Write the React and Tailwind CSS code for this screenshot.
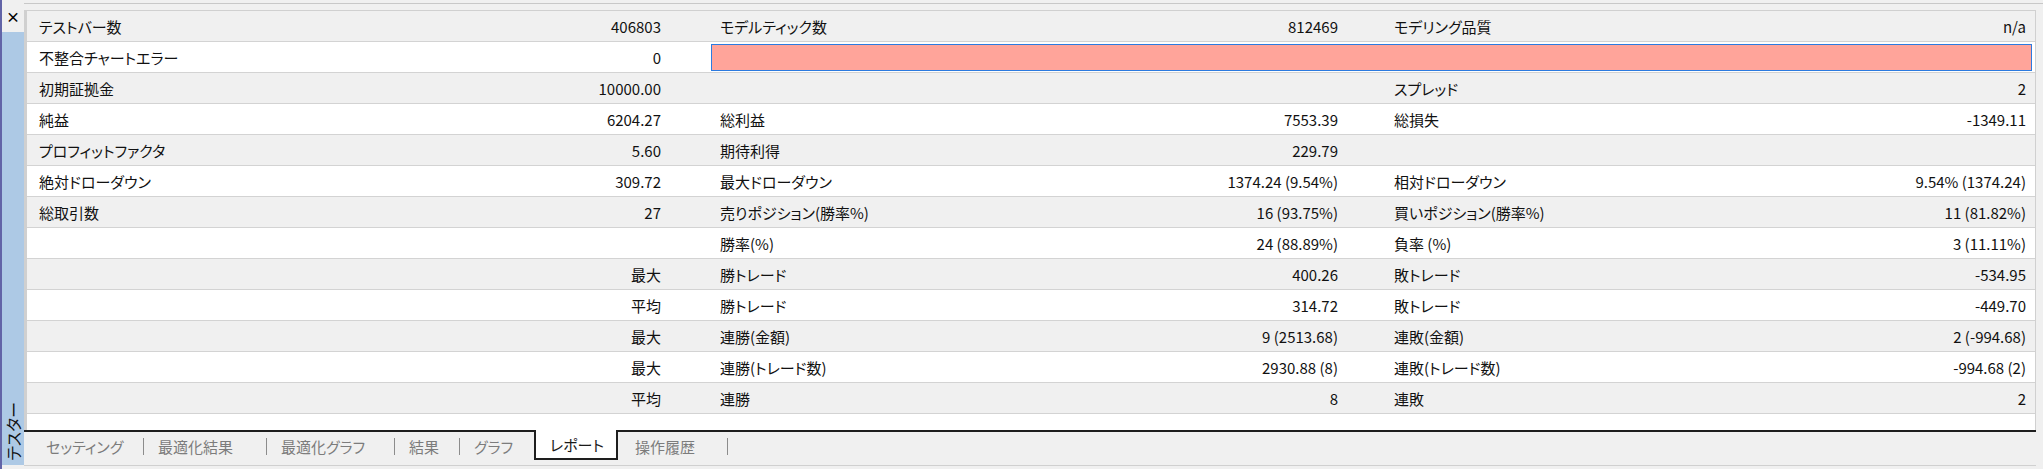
import React from 'react';

const rows = [
  ['テストバー数', '406803', 'モデルティック数', '812469', 'モデリング品質', 'n/a'],
  ['不整合チャートエラー', '0', null],
  ['初期証拠金', '10000.00', '', '', 'スプレッド', '2'],
  ['純益', '6204.27', '総利益', '7553.39', '総損失', '-1349.11'],
  ['プロフィットファクタ', '5.60', '期待利得', '229.79', '', ''],
  ['絶対ドローダウン', '309.72', '最大ドローダウン', '1374.24 (9.54%)', '相対ドローダウン', '9.54% (1374.24)'],
  ['総取引数', '27', '売りポジション(勝率%)', '16 (93.75%)', '買いポジション(勝率%)', '11 (81.82%)'],
  ['', '', '勝率(%)', '24 (88.89%)', '負率 (%)', '3 (11.11%)'],
  ['', '最大', '勝トレード', '400.26', '敗トレード', '-534.95'],
  ['', '平均', '勝トレード', '314.72', '敗トレード', '-449.70'],
  ['', '最大', '連勝(金額)', '9 (2513.68)', '連敗(金額)', '2 (-994.68)'],
  ['', '最大', '連勝(トレード数)', '2930.88 (8)', '連敗(トレード数)', '-994.68 (2)'],
  ['', '平均', '連勝', '8', '連敗', '2'],
];

// inactive tabs left of the active one: [label, slot width]
const leftTabs = [
  ['セッティング', 'w-[97px]'],
  ['最適化結果', 'w-[108px]'],
  ['最適化グラフ', 'w-[113px]'],
  ['結果', 'w-[50px]'],
];

const Cell = ({ label, value, className }) => (
  <div className={`flex items-center justify-between ${className}`}>
    <span>{label}</span>
    <span>{value}</span>
  </div>
);

const ReportRow = ({ row, index }) => {
  const bg = index % 2 === 0 ? 'bg-[#f0f0f0]' : 'bg-white';
  return (
    <div className={`flex h-[31px] shrink-0 border-b border-[#d3d3d3] ${bg}`}>
      <Cell label={row[0]} value={row[1]} className="w-[634px] pl-[12px]" />
      {row[2] === null ? (
        <div className="ml-[50px] mt-[2px] h-[27px] w-[1321px] border border-[#2c7be0] bg-[#ffa49a]" />
      ) : (
        <>
          <Cell label={row[2]} value={row[3]} className="ml-[50px] w-[627px] pl-[9px]" />
          <Cell label={row[4]} value={row[5]} className="ml-[47px] w-[641px] pl-[9px]" />
        </>
      )}
    </div>
  );
};

const Sep = () => <div className="h-[17px] w-px bg-[#8c8c8c]" />;

export default function App() {
  return (
    <div
      className="flex h-[469px] w-[2043px] overflow-hidden bg-[#f0f0f0] text-[15px] leading-none text-[#111] [font-feature-settings:'palt']"
      style={{ fontFamily: '"Noto Sans CJK JP", sans-serif' }}
    >
      {/* side handle */}
      <div className="flex w-[24px] shrink-0 flex-col border-l-2 border-[#6264a7]">
        <div className="flex h-[32px] items-start justify-center pt-[9px] text-[14px] font-bold text-black">×</div>
        <div className="mb-[4px] flex flex-1 items-end justify-center bg-[#adc9e5] pb-[4px]">
          <span className="rotate-180 text-[16px] text-[#111] [writing-mode:vertical-rl] [text-orientation:sideways]">テスター</span>
        </div>
      </div>

      {/* main */}
      <div className="flex flex-1 flex-col">
        <div className="mb-[-3px] mt-[3px] h-[10px] shrink-0 border-t border-[#c8c8c8]" />
        <div className="mr-[7px] flex h-[420px] shrink-0 flex-col overflow-hidden border-l-[3px] border-r border-t border-[#d0d0d0] bg-white">
          {rows.map((row, i) => (
            <ReportRow key={i} row={row} index={i} />
          ))}
        </div>

        {/* tabs */}
        <div className="mr-[7px] flex h-[36px] shrink-0 items-start border-b border-[#d0d0d0] text-[#7c7c7c]">
          <div className="flex h-[31px] w-[510px] shrink-0 items-center border-t-2 border-[#1e1e1e] pl-[22px]">
            {leftTabs.map(([label, w]) => (
              <React.Fragment key={label}>
                <div className={`${w} shrink-0`}>{label}</div>
                <div className="w-[15px] shrink-0">
                  <Sep />
                </div>
              </React.Fragment>
            ))}
            <div className="shrink-0">グラフ</div>
          </div>
          <div className="flex h-[30px] w-[84px] shrink-0 items-center border-x-2 border-b-2 border-[#1e1e1e] bg-white pl-[14px] text-[#1a1a1a]">
            レポート
          </div>
          <div className="flex h-[31px] flex-1 items-center border-t-2 border-[#1e1e1e] pl-[17px]">
            <div className="w-[92px] shrink-0">操作履歴</div>
            <Sep />
          </div>
        </div>
      </div>
    </div>
  );
}
